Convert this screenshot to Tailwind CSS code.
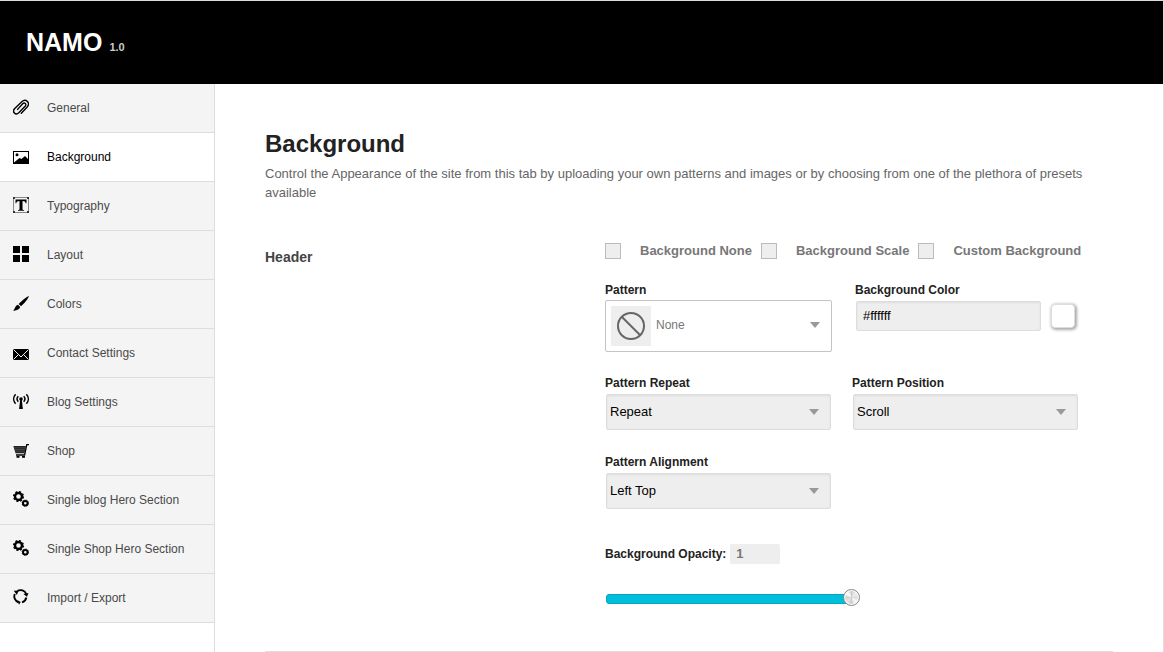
<!DOCTYPE html>
<html lang="en">
<head>
<meta charset="utf-8">
<meta name="viewport" content="width=device-width, initial-scale=1">
<title>NAMO – Background</title>
<script src="https://cdn.jsdelivr.net/npm/@tailwindcss/browser@4"></script>
</head>
<body class="bg-white font-['Liberation_Sans',Arial,sans-serif] text-[12px] text-[#222]">
<svg class="hidden" aria-hidden="true">
  <defs>
    <g id="gears" fill="none" stroke="#000">
      <circle cx="5.500" cy="5.500" r="3.500" stroke-width="2.400"/>
      <circle cx="5.500" cy="5.500" r="4.900" stroke-width="1.300" stroke-dasharray="2 1.848"/>
      <circle cx="12.300" cy="12.200" r="2.300" stroke-width="2"/>
      <circle cx="12.300" cy="12.200" r="3.200" stroke-width=".8" stroke-dasharray="1.300 1.213"/>
    </g>
  </defs>
</svg>
<div class="flex min-h-screen flex-col border-t border-r border-[#ddd]">
  <header class="flex h-[83px] items-baseline gap-[7px] bg-black px-[26px] pt-[27px]">
    <h1 class="text-[25px] leading-7 font-bold text-white">NAMO</h1>
    <span class="text-[11px] font-bold text-[#ccc]">1.0</span>
  </header>
  <div class="flex flex-1">
    <nav class="w-[215px] shrink-0 border-r border-[#ddd] text-[#4a4a4a]" aria-label="Sections">
      <a href="#" class="flex h-[49px] items-center gap-[18px] border-b border-[#ddd] bg-[#f4f4f4] pl-[13px]">
        <svg class="mb-[2px] size-4" viewBox="0 0 16 16" fill="none" stroke="#000" stroke-width="1.400" stroke-linecap="round" stroke-linejoin="round"><path d="M8.300 14.300 14 8.300c4-4.300-1.200-9.300-5.200-5.500L2 9.200c-3.700 3.700.8 7.500 3.800 4.600l6.300-6.500c2-2.200-.6-4.200-2.400-2.500L4.600 10.400"/></svg>
        General
      </a>
      <a href="#" aria-current="page" class="flex h-[49px] items-center gap-[18px] border-b border-[#ddd] bg-white pl-[13px] text-black">
        <svg class="mb-[2px] size-4" viewBox="0 0 16 16"><path d="M0 3h16v13H0z"/><path fill="#fff" d="M1 4h14v7l-3-3-3.500 3L6.500 10 1 14.500z"/><circle cx="4" cy="6.800" r="1.500"/></svg>
        Background
      </a>
      <a href="#" class="flex h-[49px] items-center gap-[18px] border-b border-[#ddd] bg-[#f4f4f4] pl-[13px]">
        <svg class="mb-[2px] size-4" viewBox="0 0 16 16"><path fill="none" stroke="#888" d="M.5.5h15v15H.5z"/><path fill="#333" d="M0 0h2v2H0zM14 0h2v2h-2zM0 14h2v2H0zM14 14h2v2h-2z"/><path d="M2.500 2.500h11v3.700h-.8c-.3-1.500-.9-2.200-3.200-2.200v8c0 .8.400 1 1.500 1.100v.7H5v-.7c1.100-.1 1.500-.3 1.500-1.100V4C4.200 4 3.600 4.700 3.300 6.200h-.8z"/></svg>
        Typography
      </a>
      <a href="#" class="flex h-[49px] items-center gap-[18px] border-b border-[#ddd] bg-[#f4f4f4] pl-[13px]">
        <svg class="mb-[2px] size-4" viewBox="0 0 16 16"><path d="M0 0h7v7H0zM9 0h7v7H9zM0 9h7v7H0zM9 9h7v7H9z"/></svg>
        Layout
      </a>
      <a href="#" class="flex h-[49px] items-center gap-[18px] border-b border-[#ddd] bg-[#f4f4f4] pl-[13px]">
        <svg class="mb-[2px] size-4" viewBox="0 0 16 16"><path d="M16 1c-.8 2.700-4.500 7.300-8 10.300L5.700 9C8.500 6 13 2.200 16 1zM5 9.800l2.200 2.300C6.600 14.500 3.500 16 0 15.600c2-.9 1.500-4.400 5-5.800z"/></svg>
        Colors
      </a>
      <a href="#" class="flex h-[49px] items-center gap-[18px] border-b border-[#ddd] bg-[#f4f4f4] pl-[13px]">
        <svg class="mb-[2px] size-4" viewBox="0 0 16 16"><path d="M0 5h16v11H0z"/><path d="m.5 5.500 7.500 7.500 7.500-7.500M.5 15.500l5-5M15.500 15.500l-5-5" fill="none" stroke="#f4f4f4"/></svg>
        Contact Settings
      </a>
      <a href="#" class="flex h-[49px] items-center gap-[18px] border-b border-[#ddd] bg-[#f4f4f4] pl-[13px]">
        <svg class="mb-[2px] size-4" viewBox="0 0 16 16"><circle cx="8" cy="6" r="1.800"/><path d="M7.200 7h1.600l1.100 9H6.100z"/><path d="M5.300 3.300c-1.400 1.500-1.400 3.900 0 5.400M10.700 3.300c1.400 1.500 1.400 3.900 0 5.400M2.600 1.200c-2.500 2.800-2.500 6.800 0 9.600M13.400 1.200c2.500 2.800 2.500 6.800 0 9.600" fill="none" stroke="#000" stroke-width="1.500"/></svg>
        Blog Settings
      </a>
      <a href="#" class="flex h-[49px] items-center gap-[18px] border-b border-[#ddd] bg-[#f4f4f4] pl-[13px]">
        <svg class="mb-[2px] size-4" viewBox="0 0 16 16"><path fill="#222" d="M.3 4h12.600l-1.500 7.200H2.500z"/><path d="M1 5.800h11.500M1.500 7.500h11M2 9.200h10" stroke="#666" stroke-width=".5"/><path d="M16 2.600h-2.200L11.600 13H3" fill="none" stroke="#000" stroke-width="1.300"/><path d="M3.500 14h3v1.800h-3zM9 14h3v1.800H9z"/></svg>
        Shop
      </a>
      <a href="#" class="flex h-[49px] items-center gap-[18px] border-b border-[#ddd] bg-[#f4f4f4] pl-[13px]">
        <svg class="mb-[2px] size-4" viewBox="0 0 16 16"><use href="#gears"/></svg>
        Single blog Hero Section
      </a>
      <a href="#" class="flex h-[49px] items-center gap-[18px] border-b border-[#ddd] bg-[#f4f4f4] pl-[13px]">
        <svg class="mb-[2px] size-4" viewBox="0 0 16 16"><use href="#gears"/></svg>
        Single Shop Hero Section
      </a>
      <a href="#" class="flex h-[49px] items-center gap-[18px] border-b border-[#ddd] bg-[#f4f4f4] pl-[13px]">
        <svg class="mb-[2px] size-4" viewBox="0 0 16 16"><path d="M4.500 1.900a6.200 6.200 0 0 1 8.700 3M13.300 8.500A6.200 6.200 0 0 1 9 13.300M5.500 13.300A6.200 6.200 0 0 1 1.800 5" fill="none" stroke="#000" stroke-width="1.900"/><path d="m.8 1.800 4.800-.2-1.700 4.500zM15.500 4l-1.500 3.800L10.400 5zM4.200 10.900l3.500 2.200-1.700 2.600z"/></svg>
        Import / Export
      </a>
    </nav>
    <main class="min-w-0 flex-1 px-[50px] pt-[46px]">
      <h2 class="text-[24px] leading-7 font-bold">Background</h2>
      <p class="mt-[6px] text-[13px] leading-[19px] text-[#666]">Control the Appearance of the site from this tab by uploading your own patterns and images or by choosing from one of the plethora of presets available</p>
      <section class="mt-[39px] flex border-b border-[#ddd] pb-[45px]">
        <h3 class="w-[340px] shrink-0 pt-[6px] text-[14px] leading-5 font-bold text-[#444]">Header</h3>
        <form class="min-w-0 flex-1">
          <div class="flex gap-[9px] text-[13px] leading-5 font-bold whitespace-nowrap text-[#777]">
            <label class="flex items-center gap-[19px]"><input type="checkbox" class="size-4 appearance-none border border-[#bbb] bg-[#eee] checked:bg-[#00bfdb]">Background None</label>
            <label class="flex items-center gap-[19px]"><input type="checkbox" class="size-4 appearance-none border border-[#bbb] bg-[#eee] checked:bg-[#00bfdb]">Background Scale</label>
            <label class="flex items-center gap-[19px]"><input type="checkbox" class="size-4 appearance-none border border-[#bbb] bg-[#eee] checked:bg-[#00bfdb]">Custom Background</label>
          </div>
          <div class="mt-[21px] flex gap-[23px]">
            <div class="w-[227px]">
              <label for="pattern" class="block leading-4 font-bold">Pattern</label>
              <button id="pattern" type="button" aria-haspopup="listbox" class="mt-[2px] flex h-[52px] w-full items-center gap-[5px] rounded-xs border border-[#c4c4c4] bg-white pr-[11px] pl-[5px] text-left text-[#777]">
                <span class="grid size-10 place-items-center bg-[#eee]"><svg class="size-[30px]" viewBox="0 0 30 30" fill="none" stroke="#666" stroke-width="2"><circle cx="15" cy="15" r="13"/><path d="m6 6 18 18"/></svg></span>
                <span class="flex-1 pb-[2px]">None</span>
                <svg class="mb-[2px] h-[6px] w-[10px]" viewBox="0 0 10 6" fill="#999"><path d="M0 0h10L5 6z"/></svg>
              </button>
            </div>
            <div>
              <label for="color" class="block leading-4 font-bold">Background Color</label>
              <div class="mt-[3px] flex items-center gap-[10px] pl-px">
                <input id="color" type="text" value="#ffffff" class="h-[30px] w-[185px] rounded-xs border border-[#ddd] bg-[#eee] px-[6px] pb-[2px] text-[13px] text-black shadow-[inset_0_1px_2px_#ddd]">
                <button type="button" aria-label="Pick color" class="size-6 rounded-sm border border-[#ddd] bg-white shadow-[1px_1px_3px_1px_#aaa]"></button>
              </div>
            </div>
          </div>
          <div class="mt-[23px] flex gap-[21px]">
            <div class="w-[226px]">
              <label for="repeat" class="block leading-4 font-bold">Pattern Repeat</label>
              <div class="mt-[3px] grid items-center pl-px">
                <select id="repeat" class="col-start-1 row-start-1 h-9 appearance-none rounded-xs border border-[#ddd] bg-[#eee] px-[3px] text-[13px] text-black shadow-[inset_0_1px_2px_#ddd]"><option>Repeat</option></select>
                <svg class="pointer-events-none col-start-1 row-start-1 mr-3 h-[6px] w-[10px] justify-self-end" viewBox="0 0 10 6" fill="#999"><path d="M0 0h10L5 6z"/></svg>
              </div>
            </div>
            <div class="w-[226px]">
              <label for="position" class="block leading-4 font-bold">Pattern Position</label>
              <div class="mt-[3px] grid items-center pl-px">
                <select id="position" class="col-start-1 row-start-1 h-9 appearance-none rounded-xs border border-[#ddd] bg-[#eee] px-[3px] text-[13px] text-black shadow-[inset_0_1px_2px_#ddd]"><option>Scroll</option></select>
                <svg class="pointer-events-none col-start-1 row-start-1 mr-3 h-[6px] w-[10px] justify-self-end" viewBox="0 0 10 6" fill="#999"><path d="M0 0h10L5 6z"/></svg>
              </div>
            </div>
          </div>
          <div class="mt-6 w-[226px]">
            <label for="align" class="block leading-4 font-bold">Pattern Alignment</label>
            <div class="mt-[3px] grid items-center pl-px">
              <select id="align" class="col-start-1 row-start-1 h-9 appearance-none rounded-xs border border-[#ddd] bg-[#eee] px-[3px] text-[13px] text-black shadow-[inset_0_1px_2px_#ddd]"><option>Left Top</option></select>
              <svg class="pointer-events-none col-start-1 row-start-1 mr-3 h-[6px] w-[10px] justify-self-end" viewBox="0 0 10 6" fill="#999"><path d="M0 0h10L5 6z"/></svg>
            </div>
          </div>
          <div class="mt-[35px] flex items-center gap-1">
            <label for="opacity" class="leading-4 font-bold">Background Opacity:</label>
            <input id="opacity" type="text" value="1" class="h-5 w-[50px] rounded-xs bg-[#eee] px-[6px] pb-[2px] text-[13px] font-bold text-[#777]">
          </div>
          <div class="mt-[25px] grid w-[255px] items-center">
            <div class="col-start-1 row-start-1 mt-[2px] mr-2 ml-px h-[10px] rounded-[3px] border border-[#0aa5bd] bg-[#00bfdb]"></div>
            <input type="range" min="0" max="1" step="0.01" value="1" aria-label="Background opacity" class="col-start-1 row-start-1 h-[17px] w-full appearance-none bg-transparent [&::-webkit-slider-thumb]:size-[17px] [&::-webkit-slider-thumb]:appearance-none [&::-webkit-slider-thumb]:rounded-full [&::-webkit-slider-thumb]:border [&::-webkit-slider-thumb]:border-[#888] [&::-webkit-slider-thumb]:bg-[conic-gradient(#ccc,#eee_12%,#ddd_25%,#f8f8f8_38%,#ccc_50%,#e4e4e4_62%,#d4d4d4_75%,#fff_88%,#ccc)] [&::-webkit-slider-thumb]:shadow-[inset_0_0_0_1px_#fff]">
          </div>
        </form>
      </section>
    </main>
  </div>
</div>
</body>
</html>
